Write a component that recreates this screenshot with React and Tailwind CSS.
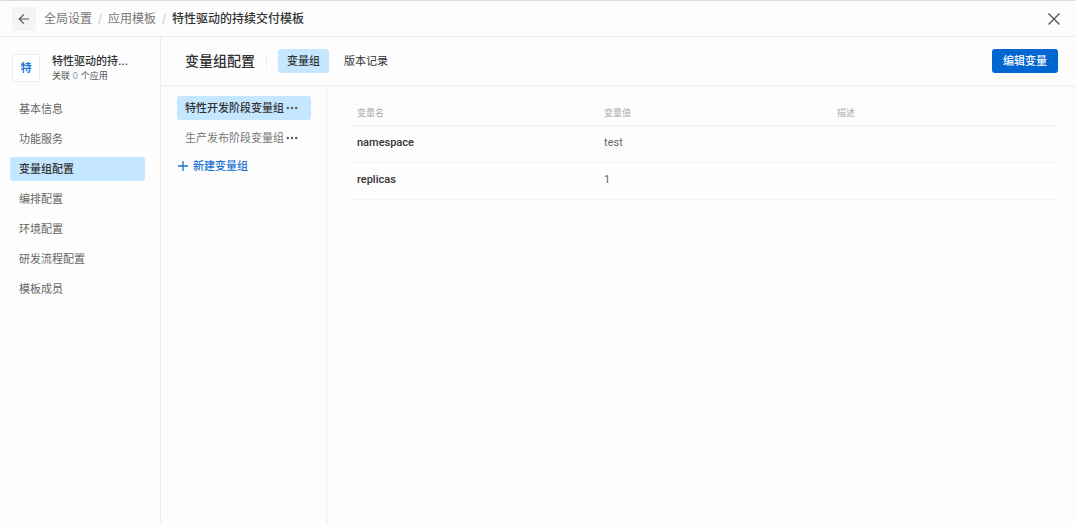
import React from "react";

const navItems = ["基本信息", "功能服务", "变量组配置", "编排配置", "环境配置", "研发流程配置", "模板成员"];
const groups = ["特性开发阶段变量组", "生产发布阶段变量组"];
const variables = [
  { name: "namespace", value: "test", description: "" },
  { name: "replicas", value: "1", description: "" },
];

function ArrowLeftIcon() {
  return (
    <svg className="size-3" viewBox="0 0 12 12" fill="none" stroke="currentColor" strokeWidth="1.2" aria-hidden="true">
      <path d="M11 6H1.5M5.8 1.4 1.2 6l4.6 4.6" />
    </svg>
  );
}

function CloseIcon() {
  return (
    <svg className="size-3" viewBox="0 0 12 12" fill="none" stroke="currentColor" strokeWidth="1.4" aria-hidden="true">
      <path d="M.5.5l11 11M11.5.5l-11 11" />
    </svg>
  );
}

function PlusIcon() {
  return (
    <svg className="size-3" viewBox="0 0 12 12" fill="none" stroke="currentColor" strokeWidth="1.3" aria-hidden="true">
      <path d="M1 6h10M6 1v10" />
    </svg>
  );
}

function MoreIcon() {
  return (
    <svg className="size-3" viewBox="0 0 12 12" fill="currentColor" aria-hidden="true">
      <circle cx="1.8" cy="6" r="1.2" />
      <circle cx="6" cy="6" r="1.2" />
      <circle cx="10.2" cy="6" r="1.2" />
    </svg>
  );
}

function TopBar() {
  return (
    <header className="flex h-9 items-center justify-between border-b border-[#eeeeee] pr-3.5 pl-3">
      <div className="flex items-center gap-2">
        <button type="button" aria-label="返回" className="flex size-6 items-center justify-center rounded-xs bg-[#f3f4f4] text-[#555555]">
          <ArrowLeftIcon />
        </button>
        <nav className="flex items-center gap-1 text-xs text-[#777777]">
          <a href="#settings">全局设置</a>
          <span className="w-2 text-center text-[#cccccc]">/</span>
          <a href="#templates">应用模板</a>
          <span className="w-2 text-center text-[#cccccc]">/</span>
          <span className="font-medium text-[#333333]">特性驱动的持续交付模板</span>
        </nav>
      </div>
      <button type="button" aria-label="关闭" className="flex size-4 items-center justify-center text-[#555555]">
        <CloseIcon />
      </button>
    </header>
  );
}

function Sidebar() {
  return (
    <aside className="w-[161px] shrink-0 border-r border-[#eeeeee] pt-4">
      <div className="flex items-center gap-3 pl-3">
        <div className="flex size-7 items-center justify-center rounded-xs border border-[#eeeeee] bg-white text-[11px] font-bold text-[#1677d9]">
          特
        </div>
        <div className="whitespace-nowrap">
          <div className="text-[11px] leading-4 font-medium text-[#333333]">特性驱动的持...</div>
          <div className="text-[9px] leading-3.5 text-[#555555]">
            关联 <span className="text-[#999999]">0</span> 个应用
          </div>
        </div>
      </div>
      <nav className="mt-3.5 mr-[15px] ml-2.5 flex flex-col gap-1.5">
        {navItems.map((item) => (
          <a
            key={item}
            href="#nav"
            className={
              item === "变量组配置"
                ? "flex h-6 items-center rounded-[3px] bg-[#c5e6ff] px-[9px] text-[11px] font-medium text-[#333333]"
                : "flex h-6 items-center rounded-[3px] px-[9px] text-[11px] text-[#666666]"
            }
          >
            {item}
          </a>
        ))}
      </nav>
    </aside>
  );
}

function ContentHeader() {
  return (
    <div className="flex h-[50px] items-center justify-between border-b-2 border-[#f3f3f3] pr-[18px] pl-6">
      <div className="flex items-center">
        <h1 className="text-sm font-medium text-[#333333]">变量组配置</h1>
        <span className="mx-[11px] h-3.5 w-px bg-[#eeeeee]" />
        <div className="flex items-center gap-1.5 text-[11px]" role="tablist">
          <button type="button" role="tab" aria-selected="true" className="h-6 rounded-[3px] bg-[#c5e6ff] px-[9px] font-medium text-[#333333]">
            变量组
          </button>
          <button type="button" role="tab" aria-selected="false" className="h-6 px-[9px] text-[#333333]">
            版本记录
          </button>
        </div>
      </div>
      <button type="button" className="h-6 rounded-[3px] bg-[#0067d1] px-[11px] text-[11px] font-medium text-white">
        编辑变量
      </button>
    </div>
  );
}

function GroupList() {
  return (
    <div className="w-[167px] shrink-0 border-r-2 border-[#f5f5f5] pt-[9px] pr-[15px] pl-4">
      <ul className="flex flex-col gap-1.5">
        {groups.map((group, index) => (
          <li
            key={group}
            className={
              index === 0
                ? "flex h-6 items-center gap-0.5 rounded-[3px] bg-[#c5e6ff] pl-2 text-[11px] whitespace-nowrap text-[#333333]"
                : "flex h-6 items-center gap-0.5 rounded-[3px] pl-2 text-[11px] whitespace-nowrap text-[#777777]"
            }
          >
            <button type="button" className={index === 0 ? "font-medium" : ""}>
              {group}
            </button>
            <button type="button" aria-label="更多" className="text-[#555555]">
              <MoreIcon />
            </button>
          </li>
        ))}
      </ul>
      <button type="button" className="mt-1 flex h-6 items-center gap-1 text-[11px] font-medium text-[#1a73d1]">
        <PlusIcon />
        新建变量组
      </button>
    </div>
  );
}

function VariableTable() {
  return (
    <div className="min-w-0 flex-1 pt-3.5 pr-[18px] pl-6">
      <table className="w-full table-fixed text-left">
        <thead>
          <tr className="h-6 border-b border-[#f0f0f0] text-[9px] text-[#aaaaaa]">
            <th className="w-[35%] pl-[5px] font-normal">变量名</th>
            <th className="w-[33%] pl-[5px] font-normal">变量值</th>
            <th className="pl-[5px] font-normal">描述</th>
          </tr>
        </thead>
        <tbody className="font-['Roboto','Noto_Sans_CJK_SC',sans-serif]">
          {variables.map((row) => (
            <tr key={row.name} className="h-[37px] border-b border-[#f3f3f3] text-[11px] text-[#666666]">
              <td className="pl-[5px] font-medium text-[#333333]">{row.name}</td>
              <td className="pl-[5px]">{row.value}</td>
              <td className="pl-[5px]">{row.description}</td>
            </tr>
          ))}
        </tbody>
      </table>
    </div>
  );
}

export default function App() {
  return (
    <div className="h-screen bg-white pr-1 pb-1 font-['Inter','Noto_Sans_CJK_SC',sans-serif]">
      <div className="flex h-full flex-col border-t border-[#dddddd] bg-[#fdfdfd]">
        <TopBar />
        <div className="flex min-h-0 flex-1">
          <Sidebar />
          <main className="flex min-w-0 flex-1 flex-col">
            <ContentHeader />
            <div className="flex min-h-0 flex-1">
              <GroupList />
              <VariableTable />
            </div>
          </main>
        </div>
      </div>
    </div>
  );
}
